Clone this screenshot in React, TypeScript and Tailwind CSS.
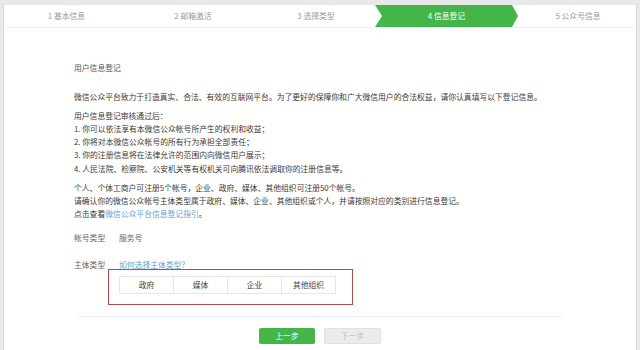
import React from "react";

const steps = [
  { label: "1 基本信息", width: "w-[125px]" },
  { label: "2 邮箱激活", width: "w-[128px]" },
  { label: "3 选择类型", width: "w-[118px]" },
  { label: "4 信息登记", width: "w-[143px]", active: true },
  { label: "5 公众号信息", width: "w-[120px]" },
];

const rules = [
  "1. 你可以依法享有本微信公众帐号所产生的权利和收益；",
  "2. 你将对本微信公众帐号的所有行为承担全部责任；",
  "3. 你的注册信息将在法律允许的范围内向微信用户展示；",
  "4. 人民法院、检察院、公安机关等有权机关可向腾讯依法调取你的注册信息等。",
];

const subjectTypes = ["政府", "媒体", "企业", "其他组织"];

export default function App() {
  return (
    <div className="h-[350px] w-[640px] overflow-hidden bg-[#e9e9e9] pt-[5px] font-['Noto_Sans_CJK_SC','Noto_Sans',sans-serif] text-[7.8px] leading-[13.3px] text-[#3a3a3a]">
      <div className="mx-[3px] h-full border-x border-[#dcdcdc] bg-white">
        {/* step bar */}
        <div className="flex h-[23px] border-b border-[#f0f0f0]">
          {steps.map((step) => (
            <div
              key={step.label}
              className={`${step.width} flex shrink-0 items-center justify-center ${
                step.active
                  ? "bg-[#44b549] text-white [clip-path:polygon(0_0,calc(100%-6px)_0,100%_50%,calc(100%-6px)_100%,0_100%,7px_50%)]"
                  : "text-[#9a9a9a]"
              }`}
            >
              {step.label}
            </div>
          ))}
        </div>

        <div className="pl-[70px] pt-[33px]">
          <div className="text-[#555]">用户信息登记</div>

          <p className="mt-[16px]">
            微信公众平台致力于打造真实、合法、有效的互联网平台。为了更好的保障你和广大微信用户的合法权益，请你认真填写以下登记信息。
          </p>

          <div className="mt-[5px]">
            <div>用户信息登记审核通过后：</div>
            {rules.map((rule) => (
              <div key={rule}>{rule}</div>
            ))}
          </div>

          <div className="mt-[5.5px]">
            <div>个人、个体工商户可注册5个帐号，企业、政府、媒体、其他组织可注册50个帐号。</div>
            <div>请确认你的微信公众帐号主体类型属于政府、媒体、企业、其他组织或个人，并请按照对应的类别进行信息登记。</div>
            <div>
              点击查看<span className="text-[#6a9fd0]">微信公众平台信息登记指引</span>。
            </div>
          </div>

          <div className="mt-[11px] flex text-[#666]">
            <span className="w-[45px]">帐号类型</span>
            <span>服务号</span>
          </div>

          <div className="mt-[13px] flex text-[#666]">
            <span className="w-[45px]">主体类型</span>
            <span className="text-[#6a9fd0]">如何选择主体类型？</span>
          </div>

          <div className="-mt-[2px] ml-[34px] h-[36px] w-[245px] border-[1.5px] border-[#b5474c] pl-[10px] pt-[6px]">
            <div className="flex w-fit">
              {subjectTypes.map((t, i) => (
                <div
                  key={t}
                  className={`flex h-[18px] w-[55px] items-center justify-center border border-[#e6e6e6] text-[#444] ${
                    i > 0 ? "-ml-px" : ""
                  }`}
                >
                  {t}
                </div>
              ))}
            </div>
          </div>
        </div>

        <div className="mx-auto mt-[11px] w-[484px] border-t border-[#eeeeee]" />

        <div className="mt-[11px] flex justify-center gap-[9px]">
          <button className="h-[16px] w-[56px] rounded-[2px] bg-[#44b549] text-[7.8px] leading-[16px] text-white">
            上一步
          </button>
          <button className="h-[16px] w-[57px] rounded-[2px] border border-[#e0e0e0] bg-[#ececec] text-[7.8px] leading-[14px] text-[#c0c0c0]">
            下一步
          </button>
        </div>
      </div>
    </div>
  );
}
